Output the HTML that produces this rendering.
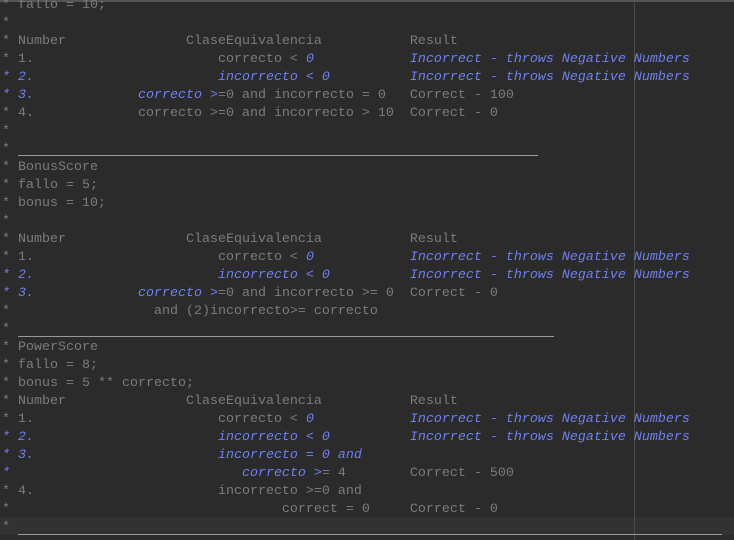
<!DOCTYPE html>
<html><head><meta charset="utf-8"><style>
html,body{margin:0;padding:0;}
body{width:734px;height:540px;background:#2b2b2b;position:relative;overflow:hidden;font-family:"Liberation Mono","Courier New",monospace;font-size:13.33px;color:#7c7c7c;}
.l{position:absolute;left:2px;height:18px;line-height:18px;white-space:pre;}
.b{color:#6f80f0;font-style:italic;}
.hr{position:absolute;height:1px;background:#9a9a9a;}
</style></head><body>
<div style="position:absolute;left:0;top:0;width:734px;height:2px;background:#555;"></div>
<div style="position:absolute;left:0;top:517px;width:734px;height:18px;background:#323232;"></div>
<div style="position:absolute;left:634px;top:2px;width:1px;height:538px;background:#4a4a4a;"></div>
<div class="l" style="top:-3px">* fallo = 10;</div>
<div class="l" style="top:15px">*</div>
<div class="l" style="top:33px">* Number               ClaseEquivalencia           Result</div>
<div class="l" style="top:51px">* 1.                       correcto &lt; <span class="b">0</span>            <span class="b">Incorrect - throws Negative Numbers</span></div>
<div class="l" style="top:69px"><span class="b">* 2.                       incorrecto &lt; 0          Incorrect - throws Negative Numbers</span></div>
<div class="l" style="top:87px"><span class="b">* 3.</span>             <span class="b">correcto &gt;</span>=0 and incorrecto = 0   Correct - 100</div>
<div class="l" style="top:105px">* 4.             correcto &gt;=0 and incorrecto &gt; 10  Correct - 0</div>
<div class="l" style="top:123px">*</div>
<div class="l" style="top:141px">*</div>
<div class="hr" style="left:18px;top:155px;width:520px"></div>
<div class="l" style="top:159px">* BonusScore</div>
<div class="l" style="top:177px">* fallo = 5;</div>
<div class="l" style="top:195px">* bonus = 10;</div>
<div class="l" style="top:213px">*</div>
<div class="l" style="top:231px">* Number               ClaseEquivalencia           Result</div>
<div class="l" style="top:249px">* 1.                       correcto &lt; <span class="b">0</span>            <span class="b">Incorrect - throws Negative Numbers</span></div>
<div class="l" style="top:267px"><span class="b">* 2.                       incorrecto &lt; 0          Incorrect - throws Negative Numbers</span></div>
<div class="l" style="top:285px"><span class="b">* 3.</span>             <span class="b">correcto &gt;</span>=0 and incorrecto &gt;= 0  Correct - 0</div>
<div class="l" style="top:303px">*                  and (2)incorrecto&gt;= correcto</div>
<div class="l" style="top:321px">*</div>
<div class="hr" style="left:18px;top:336px;width:536px"></div>
<div class="l" style="top:339px">* PowerScore</div>
<div class="l" style="top:357px">* fallo = 8;</div>
<div class="l" style="top:375px">* bonus = 5 ** correcto;</div>
<div class="l" style="top:393px">* Number               ClaseEquivalencia           Result</div>
<div class="l" style="top:411px">* 1.                       correcto &lt; <span class="b">0</span>            <span class="b">Incorrect - throws Negative Numbers</span></div>
<div class="l" style="top:429px"><span class="b">* 2.                       incorrecto &lt; 0          Incorrect - throws Negative Numbers</span></div>
<div class="l" style="top:447px"><span class="b">* 3.                       incorrecto = 0 and</span></div>
<div class="l" style="top:465px"><span class="b">*                             correcto &gt;</span>= 4        Correct - 500</div>
<div class="l" style="top:483px">* 4.                       incorrecto &gt;=0 and</div>
<div class="l" style="top:501px">*                                  correct = 0     Correct - 0</div>
<div class="l" style="top:519px">*</div>
<div class="hr" style="left:18px;top:534px;width:704px"></div>
</body></html>
